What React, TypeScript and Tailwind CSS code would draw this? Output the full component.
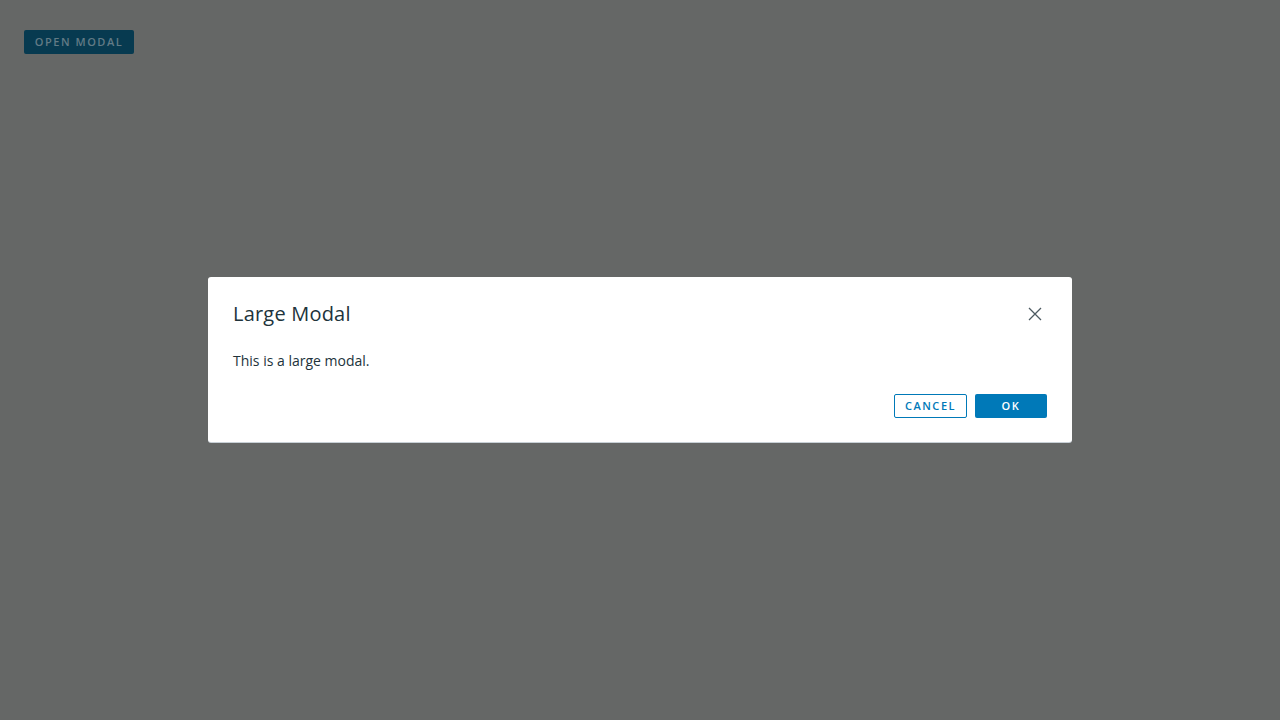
import React from "react";

export default function App() {
  return (
    <div
      className="relative w-[1280px] h-[720px] bg-[#656766] overflow-hidden"
      style={{ fontFamily: "'Open Sans', Lato, sans-serif" }}
    >
      <div className="pt-[30px] pl-[24px] flex">
        <button className="h-[24px] w-[110px] bg-[#073a50] rounded-[2px] text-[11px] font-semibold tracking-[0.14em] text-[#627b86] uppercase flex items-center justify-center">
          Open Modal
        </button>
      </div>
      <div className="absolute left-[208px] top-[277px] w-[864px] bg-white rounded-[3px] shadow-[0_1px_0_0_#c8d0d6] pl-[24px] pr-[25px] pt-[22px] pb-[24px]">
        <div className="flex items-center justify-between">
          <h3 className="text-[20px] text-[#21333b] leading-[30px] tracking-[0.01em] pl-[1px]">Large Modal</h3>
          <button className="w-[16px] h-[16px] flex items-center justify-center mr-[4px]">
            <svg width="16" height="16" viewBox="0 0 16 16" fill="none" stroke="#4d5a61" strokeWidth="1.3">
              <path d="M2 2 L14 14 M14 2 L2 14" />
            </svg>
          </button>
        </div>
        <p className="mt-[20px] text-[14px] text-[#21333b] leading-[24px] pl-[1px]">This is a large modal.</p>
        <div className="mt-[21px] flex justify-end gap-[8px]">
          <button className="h-[24px] w-[73px] border border-[#0079b8] rounded-[2px] text-[#0079b8] text-[11px] font-semibold tracking-[0.14em] uppercase flex items-center justify-center">
            Cancel
          </button>
          <button className="h-[24px] w-[72px] bg-[#0079b8] rounded-[2px] text-white text-[11px] font-semibold tracking-[0.14em] uppercase flex items-center justify-center">
            OK
          </button>
        </div>
      </div>
    </div>
  );
}
